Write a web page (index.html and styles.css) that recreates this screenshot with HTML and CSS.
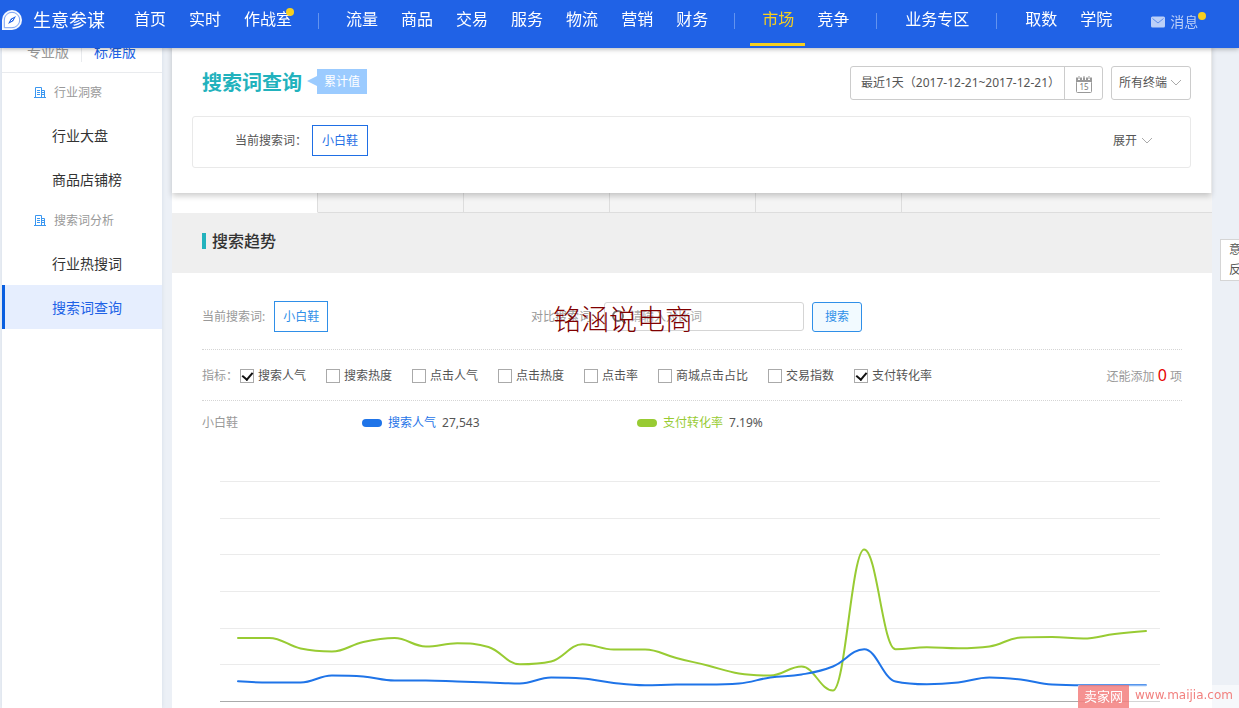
FILE: index.html
```html
<!DOCTYPE html>
<html lang="zh-CN">
<head>
<meta charset="utf-8">
<title>生意参谋 - 搜索词查询</title>
<link rel="stylesheet" href="styles.css">
</head>
<body>
<header class="topbar">
  <a class="brand" href="#">
    <svg class="brand-icon" viewBox="0 0 22 22" width="22" height="22">
      <path d="M1 21V11A10 10 0 1 1 11 21Z" fill="#f4f8ff"/>
      <path d="M3.300 18.700V11A7.700 7.700 0 1 1 11 18.700Z" fill="#fff" stroke="#7ba3f3" stroke-width="1"/>
      <path d="M15 7L12.200 12.200L7 15L9.800 9.800Z" fill="#2062e6"/>
      <path d="M9.800 12.200L12.200 9.800" stroke="#fff" stroke-width="1"/>
    </svg>
    <span>生意参谋</span>
  </a>
  <nav class="nav">
    <a href="#">首页</a>
    <a href="#">实时</a>
    <a href="#" class="has-dot">作战室</a>
    <span class="sep"></span>
    <a href="#">流量</a>
    <a href="#">商品</a>
    <a href="#">交易</a>
    <a href="#">服务</a>
    <a href="#">物流</a>
    <a href="#">营销</a>
    <a href="#">财务</a>
    <span class="sep"></span>
    <a href="#" class="active">市场</a>
    <a href="#">竞争</a>
    <span class="sep sep-wide"></span>
    <a href="#">业务专区</a>
    <span class="sep sep-wide"></span>
    <a href="#">取数</a>
    <a href="#">学院</a>
  </nav>
  <a class="message" href="#">
    <svg viewBox="0 0 14 12" width="14" height="12"><rect width="14" height="11" y="0.500" rx="1.500" fill="#bcd0f8"/><path d="M1.500 2.500L7 7L12.500 2.500" fill="none" stroke="#5e8eed" stroke-width="1"/></svg>
    <span class="message-text">消息</span>
  </a>
</header>

<div class="layout">
  <aside class="sidebar">
    <div class="editions"><a href="#">专业版</a><a href="#" class="on">标准版</a></div>
    <h2 class="group"><svg viewBox="0 0 12 12" width="12" height="12"><path d="M1.500 10V0.500H7.500V10M7.500 3.500H10.500V10M0 10.500H12M3 3.500H6M3 5.500H6M3 7.500H6M8 5.500H10M8 7.500H10" fill="none" stroke="#3b97f0"/></svg>行业洞察</h2>
    <a class="item" href="#">行业大盘</a>
    <a class="item" href="#">商品店铺榜</a>
    <h2 class="group"><svg viewBox="0 0 12 12" width="12" height="12"><path d="M1.500 10V0.500H7.500V10M7.500 3.500H10.500V10M0 10.500H12M3 3.500H6M3 5.500H6M3 7.500H6M8 5.500H10M8 7.500H10" fill="none" stroke="#3b97f0"/></svg>搜索词分析</h2>
    <a class="item" href="#">行业热搜词</a>
    <a class="item current" href="#">搜索词查询</a>
  </aside>

  <main class="main">
    <section class="panel">
      <div class="panel-head">
        <h1>搜索词查询</h1>
        <span class="tag">累计值</span>
        <div class="date">
          <input type="text" aria-label="日期" readonly value="最近1天（2017-12-21~2017-12-21）">
          <button type="button" aria-label="选择日期">
            <svg viewBox="0 0 16 17" width="16" height="17"><path d="M0 1.500H2V4H4V1.500H6V4H7V1.500H9V4H10V1.500H12V4H14V1.500H16V6H0Z" fill="#999"/><path d="M3 0V3M8 0V3M13 0V3" stroke="#999"/><rect x="0.500" y="5.500" width="15" height="11" rx="1" fill="none" stroke="#999"/><text class="cal-day" x="8" y="14" text-anchor="middle">15</text></svg>
          </button>
        </div>
        <div class="terminal">
          <select aria-label="终端"><option>所有终端</option></select>
          <svg class="chev" viewBox="0 0 12 7" width="12" height="7"><path d="M1 1L6 6L11 1" fill="none" stroke="#aaa"/></svg>
        </div>
      </div>
      <div class="filter">
        <span>当前搜索词：</span>
        <button type="button" class="chip chip-royal">小白鞋</button>
        <button type="button" class="expand">展开<svg viewBox="0 0 12 7" width="12" height="7"><path d="M1 1L6 6L11 1" fill="none" stroke="#aaa"/></svg></button>
      </div>
    </section>

    <div class="strip"><span class="first"></span><span></span><span></span><span></span><span></span><span class="rest"></span></div>
    <div class="section-head"><h2>搜索趋势</h2></div>

    <section class="trend">
      <div class="row search-row">
        <div class="current-word"><span>当前搜索词:</span><button type="button" class="chip">小白鞋</button></div>
        <label class="compare-label" for="compare">对比搜索词:</label>
        <div class="search-box">
          <svg viewBox="0 0 16 16" width="16" height="16"><circle cx="7" cy="7" r="5" fill="none" stroke="#777" stroke-width="2"/><path d="M10.500 10.500L14.500 14.500" stroke="#777" stroke-width="2"/></svg>
          <input id="compare" type="text" placeholder="请输入对比词">
        </div>
        <button type="button" class="search-btn">搜索</button>
        <span class="author-mark">铭涵说电商</span>
      </div>

      <div class="row metrics">
        <span class="muted metrics-title">指标：</span>
        <label><input type="checkbox" checked>搜索人气</label>
        <label><input type="checkbox">搜索热度</label>
        <label><input type="checkbox">点击人气</label>
        <label><input type="checkbox">点击热度</label>
        <label><input type="checkbox">点击率</label>
        <label><input type="checkbox">商城点击占比</label>
        <label><input type="checkbox">交易指数</label>
        <label><input type="checkbox" checked>支付转化率</label>
        <span class="muted remain">还能添加 <b>0</b> 项</span>
      </div>

      <div class="legend">
        <span class="muted legend-name">小白鞋</span>
        <span class="legend-item blue"><i></i><em>搜索人气</em>27,543</span>
        <span class="legend-item green"><i></i><em>支付转化率</em>7.19%</span>
      </div>

      <svg class="chart" id="chart" viewBox="0 445 980 263" role="img" aria-label="搜索趋势图">
        <path d="M18 481.500H958M18 518.500H958M18 554.500H958M18 591.500H958M18 628.500H958M18 664.500H958" stroke="#ebebeb"/>
        <path d="M18 701.500H958" stroke="#aaa"/>
      </svg>
    </section>
  </main>
</div>

<button type="button" class="feedback">意<br>反</button>
<div class="site-mark"><b>卖家网</b><span>www.maijia.com</span></div>
<script src="chart.js"></script>
</body>
</html>
```

FILE: styles.css
```css
* { box-sizing: border-box; }

body {
  margin: 0;
  background: #ecf0f6;
  color: #555;
  font: 12px/20px "Noto Sans", "Noto Sans CJK SC", sans-serif;
}

a { color: inherit; text-decoration: none; }
h1, h2 { margin: 0; }
svg { flex: none; }
button, input, select { font: inherit; color: inherit; margin: 0; }
button { cursor: pointer; white-space: nowrap; }
.muted { color: #999; }

/* top bar */
.topbar {
  position: fixed;
  top: 0;
  left: 0;
  right: 0;
  z-index: 10;
  display: flex;
  height: 48px;
  background: #2062e6;
  color: #fff;
  box-shadow: 0 1px 5px rgba(0, 0, 0, 0.3);
  white-space: nowrap;
}
.brand {
  display: flex;
  align-items: center;
  gap: 10px;
  width: 122px;
  height: 40px;
  padding-left: 1px;
  font-size: 18px;
}
.nav { display: flex; font-size: 16px; line-height: 39px; }
.nav a { position: relative; height: 46px; padding: 0 11px 0 12px; }
.nav .active { color: #f6cf1f; border-bottom: 3px solid #f6cf1f; }
.sep { width: 1px; height: 16px; margin: 13px 15px 0; background: #6393ef; }
.sep-wide { margin: 13px 16px 0; }
.has-dot::after, .message-text::after {
  content: "";
  position: absolute;
  top: 8px;
  right: 9px;
  width: 8px;
  height: 8px;
  border-radius: 50%;
  background: #f6cf1f;
}
.message {
  display: flex;
  align-items: center;
  gap: 5px;
  height: 43px;
  margin-left: 28px;
  color: #bcd0f8;
  font-size: 14px;
}
.message-text { position: relative; }
.message-text::after { top: 0; right: -8px; }

.layout { display: flex; gap: 10px; padding: 0 27px 0 2px; min-height: 100vh; }

/* side menu */
.sidebar { flex: none; width: 160px; background: #fff; box-shadow: 0 0 4px rgba(60, 80, 120, 0.12); }
.editions { display: flex; padding: 42px 0 10px; border-bottom: 1px solid #e9ebee; font-size: 14px; color: #999; }
.editions a { width: 79px; padding-left: 25px; }
.editions .on { padding-left: 12px; border-left: 1px solid #e9ebee; color: #2062e6; }
.group {
  display: flex;
  align-items: center;
  gap: 8px;
  height: 40px;
  padding-left: 32px;
  color: #999;
  font-size: 12px;
  font-weight: 400;
}
.item { display: block; padding-top: 2px; padding-left: 50px; color: #333; font-size: 14px; line-height: 42px; }
.current { padding-left: 47px; border-left: 3px solid #0a5fe0; background: #e6eefe; color: #2062e6; }

/* query panel */
.main { flex: 1; min-width: 0; background: #fff; }
.panel { position: relative; margin-right: 1px; padding: 66px 20px 25px; background: #fff; box-shadow: 0 3px 6px rgba(0, 0, 0, 0.2); }
.panel-head { display: flex; align-items: center; height: 34px; margin-bottom: 16px; padding-left: 10px; }
.panel h1 { color: #22b2bd; font-size: 20px; line-height: 30px; }
.tag { position: relative; margin: 0 0 3px 15px; padding: 0 7px; background: #9bcbff; color: #fff; line-height: 25px; }
.tag::before {
  content: "";
  position: absolute;
  top: 7px;
  right: 100%;
  border: 5px solid transparent;
  border-right: 10px solid #9bcbff;
  border-left: 0;
}
.date { display: flex; width: 253px; height: 34px; margin-left: auto; border: 1px solid #ccc; border-radius: 3px; }
.date input { flex: 1; min-width: 0; padding: 0 0 0 10px; border: 0; background: none; outline: 0; }
.date button { display: grid; place-items: center; width: 38px; padding: 3px 0 0; border: 0; border-left: 1px solid #ccc; background: none; }
.cal-day { fill: #777; font-size: 8px; }
.terminal { position: relative; margin-left: 8px; }
.terminal select { appearance: none; width: 80px; height: 34px; padding: 0 7px; border: 1px solid #ccc; border-radius: 3px; background: #fff; }
.chev { position: absolute; top: 13px; right: 9px; pointer-events: none; }
.filter { display: flex; align-items: center; height: 52px; padding: 0 37px 3px 42px; border: 1px solid #e9e9e9; border-radius: 3px; }
.chip { height: 31px; margin-left: 9px; padding: 0 8px; border: 1px solid #2f8fe8; background: #fff; color: #2f8fe8; }
.chip-royal { margin-left: 5px; padding: 0 9px; border-color: #1f6fe5; color: #1f6fe5; }
.expand { display: flex; align-items: center; gap: 4px; margin-left: auto; padding: 0; border: 0; background: none; }

/* tab strip under the panel */
.strip { display: flex; height: 20px; background: #f4f4f4; }
.strip span { width: 146px; border-right: 1px solid #ddd; border-bottom: 1px solid #ddd; }
.strip .first { background: #fff; border-bottom-color: #fff; }
.strip .rest { flex: 1; border-right: 0; }
.section-head { padding: 16px 30px 20px; background: #efefef; }
.section-head h2 { display: flex; align-items: center; gap: 6px; color: #333; font-size: 16px; font-weight: 500; line-height: 24px; }
.section-head h2::before { content: ""; width: 4px; height: 16px; background: #22b2bd; }

/* trend */
.trend { padding: 0 30px; }
.row { display: flex; align-items: center; border-bottom: 1px dotted #d5d5d5; white-space: nowrap; }
.search-row { position: relative; padding: 28px 0 17px; color: #999; }
.current-word { width: 329px; }
.compare-label { width: 73px; }
.search-box { display: flex; align-items: center; gap: 3px; width: 200px; height: 29px; padding-left: 6px; border: 1px solid #d5d5d5; border-radius: 3px; }
.search-box input { flex: 1; min-width: 0; padding: 0; border: 0; outline: 0; }
.search-box input::placeholder { color: #aaa; }
.search-btn { width: 50px; height: 30px; margin-left: 8px; padding: 0; border: 1px solid #2f8fe8; border-radius: 3px; background: #f2faff; color: #2f8fe8; }
.author-mark {
  position: absolute;
  top: 27px;
  left: 351px;
  color: #800000;
  font-family: "Noto Sans CJK SC", sans-serif;
  font-size: 28px;
  font-weight: 300;
  line-height: 36px;
}
.metrics { height: 51px; padding-top: 2px; }
.metrics-title { width: 38px; }
.metrics label { display: flex; align-items: center; gap: 4px; margin-right: 20px; }
.metrics input { appearance: none; display: grid; place-items: center; width: 14px; height: 14px; border: 1px solid #aaa; background: #fff; }
.metrics input:checked::before { content: ""; width: 5px; height: 8px; margin-bottom: 2px; border: solid #111; border-width: 0 2px 2px 0; transform: rotate(40deg); }
.remain { margin-left: auto; }
.remain b { color: #e60000; font-size: 16px; font-weight: 400; }
.legend { display: flex; align-items: center; height: 44px; }
.legend-name { width: 160px; }
.legend-item { display: flex; align-items: center; gap: 6px; width: 275px; }
.legend-item i { width: 20px; height: 8px; border-radius: 4px; background: currentColor; }
.legend-item em { font-style: normal; }
.blue i, .blue em { color: #1f74e8; }
.green i, .green em { color: #98cb33; }
.chart { display: block; width: 100%; }
.line { fill: none; stroke-width: 2; stroke-linecap: round; }
.line-a { stroke: #1f74e8; }
.line-b { stroke: #98cb33; }

/* overlays */
.feedback {
  position: fixed;
  top: 239px;
  right: -5px;
  padding: 0 2px 0 8px;
  border: 1px solid #d5d5d5;
  background: #fff;
  line-height: 20px;
}
.site-mark {
  position: fixed;
  right: 0;
  bottom: 0;
  display: flex;
  background: rgba(255, 255, 255, 0.5);
  color: #f2817f;
  line-height: 23px;
}
.site-mark b { padding: 0 6px; border-radius: 3px 0 0 0; background: rgba(242, 110, 108, 0.75); color: #fff; font-size: 13px; font-weight: 400; }
.site-mark span { padding: 0 6px; font-family: "DejaVu Sans", Verdana, sans-serif; font-size: 12px; line-height: 21px; }
```

FILE: chart.js
```js
const series = [
  { name: "line-b", y: [638, 638, 648.5, 651.5, 642, 638, 646.5, 643.3, 647, 664.3, 661.5, 644.3, 649.5, 649.5, 658, 665.5, 673.5, 675.5, 666.5, 690.5, 549.5, 649.3, 647.3, 648.3, 646.5, 637.5, 637, 638.5, 634, 631] },
  { name: "line-a", y: [681.3, 682.5, 682.5, 675.5, 676.5, 680.5, 680.5, 681.5, 682.5, 683.5, 677.5, 678.5, 683, 685.3, 684.5, 684.5, 683.5, 677.5, 674.5, 666.5, 649.3, 681.5, 684.3, 682.5, 677.5, 679.5, 684.5, 685.3, 685.3, 685.3] }
];

// Smooth line whose control points never overshoot the neighbouring values.
function spline(points) {
  let d = `M${points[0].x} ${points[0].y}`;
  let out = points[0];
  for (let i = 1; i < points.length; i++) {
    const p = points[i], prev = points[i - 1], next = points[i + 1];
    let left = p, right = p;
    if (next) {
      left = { x: (1.5 * p.x + prev.x) / 2.5, y: (1.5 * p.y + prev.y) / 2.5 };
      right = { x: (1.5 * p.x + next.x) / 2.5, y: (1.5 * p.y + next.y) / 2.5 };
      const shift = (right.y - left.y) * (right.x - p.x) / (right.x - left.x) + p.y - right.y;
      left.y += shift;
      right.y += shift;
      const clamp = (v, q) => {
        const lo = Math.min(q.y, p.y), hi = Math.max(q.y, p.y);
        return Math.min(hi, Math.max(lo, v));
      };
      left.y = clamp(left.y, prev);
      right.y = 2 * p.y - left.y;
      right.y = clamp(right.y, next);
      left.y = 2 * p.y - right.y;
    }
    d += `C${out.x} ${out.y} ${left.x} ${left.y} ${p.x} ${p.y}`;
    out = right;
  }
  return d;
}

const chart = document.getElementById("chart");
series.forEach(({ name, y }) => {
  const step = 908 / (y.length - 1);
  const path = document.createElementNS("http://www.w3.org/2000/svg", "path");
  path.setAttribute("class", `line ${name}`);
  path.setAttribute("d", spline(y.map((v, i) => ({ x: 36 + i * step, y: v }))));
  chart.append(path);
});
```
